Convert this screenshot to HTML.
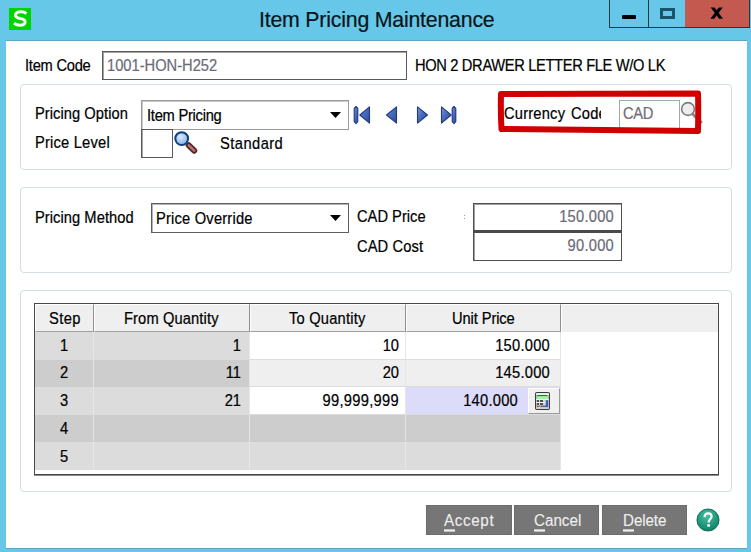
<!DOCTYPE html>
<html><head><meta charset="utf-8">
<style>
*{margin:0;padding:0;box-sizing:border-box}
html,body{width:751px;height:552px;overflow:hidden;background:#66C7E8;font-family:"Liberation Sans",sans-serif}
.a{position:absolute}
.t{position:absolute;font-size:14.7px;line-height:20px;white-space:nowrap;color:#000;-webkit-text-stroke:0.2px currentColor;transform:scaleY(1.12);transform-origin:0 15px}
#client{position:absolute;left:6px;top:41px;width:741px;height:507px;background:#fff;box-shadow:0 -1px 0 #5AA6C4, 0 1px 0 #5AA6C4}
</style></head><body>
<div class="a" style="left:9px;top:8px;width:22px;height:22px;background:#00D400"></div>
<svg class="a" style="left:9px;top:8px" width="22" height="22" viewBox="0 0 22 22"><path d="M17.4 5.6 C15.9 4.2 13.6 3.7 11.1 3.8 C8 3.9 6.4 5.3 6.5 7.3 C6.6 9.3 8.6 10.1 11.2 10.6 C14.2 11.1 16.1 11.9 16.1 14.1 C16.1 16.3 13.8 17.3 11 17.3 C8.5 17.3 6.5 16.5 5 15.1" fill="none" stroke="#fff" stroke-width="3" stroke-linecap="butt"/></svg>
<div class="t" style="left:259px;top:7px;font-size:21.3px;line-height:26px;letter-spacing:-0.2px;color:#06141A;transform:none">Item Pricing Maintenance</div>
<div class="a" style="left:609px;top:0px;width:141px;height:28px;border:1px solid #2A3840;border-top:none"></div>
<div class="a" style="left:648px;top:0px;width:1px;height:28px;background:#2A3840"></div>
<div class="a" style="left:685px;top:0px;width:64px;height:27px;background:#C45A4F"></div>
<div class="a" style="left:685px;top:27px;width:64px;height:1px;background:#4A2A28"></div>
<div class="a" style="left:622px;top:15px;width:14px;height:4px;background:#000;border-radius:1px"></div>
<div class="a" style="left:660px;top:8px;width:15px;height:11px;border:3px solid #1B5468"></div>
<svg class="a" style="left:710px;top:7px" width="14" height="12" viewBox="0 0 14 12"><defs><clipPath id="xc"><rect x="0" y="0.4" width="14" height="11.4"/></clipPath></defs><g clip-path="url(#xc)"><path d="M1.8 -0.6 L11.6 12.4 M11.6 -0.6 L1.8 12.4" stroke="#000" stroke-width="3.2"/></g></svg>
<div id="client"></div>
<div class="t" style="left:25px;top:56px;font-size:14.7px;letter-spacing:-0.25px;color:#000;">Item Code</div>
<div class="a" style="left:102px;top:51px;width:305px;height:29px;border:1px solid #5A5A5A;box-shadow:inset 1px 1px 0 #A4A4A4;background:#fff"></div>
<div class="t" style="left:107px;top:56px;font-size:14.7px;letter-spacing:0px;color:#6B6B78;">1001-HON-H252</div>
<div class="t" style="left:415px;top:56px;font-size:14.7px;letter-spacing:-0.35px;color:#000;">HON 2 DRAWER LETTER FLE W/O LK</div>
<div class="a" style="left:20px;top:84px;width:712px;height:86px;border:1px solid #D3DDE4;border-radius:4px"></div>
<div class="t" style="left:35px;top:104px;font-size:14.7px;letter-spacing:0.05px;color:#000;">Pricing Option</div>
<div class="t" style="left:35px;top:133px;font-size:14.7px;letter-spacing:0.2px;color:#000;">Price Level</div>
<div class="a" style="left:141px;top:100px;width:208px;height:30px;border:1px solid #9A9A9A;box-shadow:inset 1px 1px 0 #C8C8C8;background:#fff"></div>
<div class="t" style="left:147px;top:106px;font-size:14.7px;letter-spacing:-0.25px;color:#000;">Item Pricing</div>
<svg class="a" style="left:330px;top:112px" width="11" height="6"><path d="M0 0 L11 0 L5.5 6 Z" fill="#000"/></svg>
<div class="a" style="left:141px;top:129px;width:32px;height:29px;border:1px solid #5A5A5A;box-shadow:inset 1px 0 0 #A4A4A4;background:#fff"></div>
<svg class="a" style="left:173px;top:130px" width="25" height="25" viewBox="0 0 25 25"><defs><radialGradient id="lg" cx="0.4" cy="0.35" r="0.7"><stop offset="0" stop-color="#DCEBFB"/><stop offset="1" stop-color="#80B0E8"/></radialGradient></defs><line x1="15.8" y1="15.3" x2="21.2" y2="20.7" stroke="#5A2626" stroke-width="6" stroke-linecap="round"/><line x1="15.8" y1="15.3" x2="21.2" y2="20.7" stroke="#B07878" stroke-width="2.4" stroke-linecap="round"/><circle cx="8.7" cy="8.6" r="6.4" fill="url(#lg)" stroke="#0C4080" stroke-width="2"/></svg>
<div class="t" style="left:220px;top:134px;font-size:14.7px;letter-spacing:0.45px;color:#000;">Standard</div>
<svg class="a" style="left:353px;top:104px" width="20" height="22" viewBox="0 0 20 22"><defs><linearGradient id="ngfirst" x1="0" y1="0" x2="1" y2="1"><stop offset="0" stop-color="#7A9AE0"/><stop offset="0.45" stop-color="#4A6CC0"/><stop offset="1" stop-color="#2C4A9C"/></linearGradient></defs><path d="M3 2.4 L4.8 4.4 L4.8 17.6 L3 19.6 L1.2 17.6 L1.2 4.4 Z" fill="url(#ngfirst)" stroke="#22397E" stroke-width="1.1" stroke-linejoin="round"/><path d="M16.5 2.9 L16.5 19.1 L6.8 11 Z" fill="url(#ngfirst)" stroke="#22397E" stroke-width="1.1" stroke-linejoin="round"/></svg>
<svg class="a" style="left:385px;top:104px" width="20" height="22" viewBox="0 0 20 22"><defs><linearGradient id="ngprev" x1="0" y1="0" x2="1" y2="1"><stop offset="0" stop-color="#7A9AE0"/><stop offset="0.45" stop-color="#4A6CC0"/><stop offset="1" stop-color="#2C4A9C"/></linearGradient></defs><path d="M11.5 2.9 L11.5 19.1 L1.5 11 Z" fill="url(#ngprev)" stroke="#22397E" stroke-width="1.1" stroke-linejoin="round"/></svg>
<svg class="a" style="left:416px;top:104px" width="20" height="22" viewBox="0 0 20 22"><defs><linearGradient id="ngnext" x1="0" y1="0" x2="1" y2="1"><stop offset="0" stop-color="#7A9AE0"/><stop offset="0.45" stop-color="#4A6CC0"/><stop offset="1" stop-color="#2C4A9C"/></linearGradient></defs><path d="M1.5 2.9 L1.5 19.1 L11.5 11 Z" fill="url(#ngnext)" stroke="#22397E" stroke-width="1.1" stroke-linejoin="round"/></svg>
<svg class="a" style="left:440px;top:104px" width="20" height="22" viewBox="0 0 20 22"><defs><linearGradient id="nglast" x1="0" y1="0" x2="1" y2="1"><stop offset="0" stop-color="#7A9AE0"/><stop offset="0.45" stop-color="#4A6CC0"/><stop offset="1" stop-color="#2C4A9C"/></linearGradient></defs><path d="M1.5 2.9 L1.5 19.1 L11.2 11 Z" fill="url(#nglast)" stroke="#22397E" stroke-width="1.1" stroke-linejoin="round"/><path d="M14 2.4 L15.8 4.4 L15.8 17.6 L14 19.6 L12.2 17.6 L12.2 4.4 Z" fill="url(#nglast)" stroke="#22397E" stroke-width="1.1" stroke-linejoin="round"/></svg>
<div class="a" style="left:504px;top:97px;width:97px;height:29px;overflow:hidden"><div class="t" style="left:0px;top:7px;font-size:14.7px;letter-spacing:0.2px;word-spacing:1.5px">Currency Code</div></div>
<div class="a" style="left:619px;top:100px;width:61px;height:30px;border:1px solid #A0A8AE;background:#fff"></div>
<div class="t" style="left:623px;top:104px;font-size:14.7px;letter-spacing:-0.3px;color:#6E6E78;">CAD</div>
<svg class="a" style="left:680px;top:101px" width="26" height="26" viewBox="0 0 26 26"><line x1="13" y1="13.5" x2="21" y2="21" stroke="#8A8A8A" stroke-width="3" stroke-linecap="round"/><circle cx="8" cy="8" r="6.4" fill="#EDEDED" stroke="#7C7C7C" stroke-width="1.6"/></svg>
<svg class="a" style="left:495px;top:88px" width="212" height="48" viewBox="0 0 212 48"><path d="M6 6 L203 5.5 Q203.5 20 203 43 L6.5 41 Q5.5 25 6 6 Z" fill="none" stroke="#D10000" stroke-width="6" stroke-linejoin="round"/></svg>
<div class="a" style="left:20px;top:187px;width:712px;height:86px;border:1px solid #D3DDE4;border-radius:4px"></div>
<div class="t" style="left:35px;top:208px;font-size:14.7px;letter-spacing:0.05px;color:#000;">Pricing Method</div>
<div class="a" style="left:151px;top:203px;width:198px;height:30px;border:1px solid #5E5E5E;box-shadow:inset 1px 1px 0 #B4B4B4;background:#fff"></div>
<div class="t" style="left:156px;top:209px;font-size:14.7px;letter-spacing:0.2px;color:#000;">Price Override</div>
<svg class="a" style="left:330px;top:215px" width="11" height="6"><path d="M0 0 L11 0 L5.5 6 Z" fill="#000"/></svg>
<div class="t" style="left:357px;top:207px;font-size:14.7px;letter-spacing:0px;color:#000;">CAD Price</div>
<div class="t" style="left:357px;top:237px;font-size:14.7px;letter-spacing:0.1px;color:#000;">CAD Cost</div>
<div class="a" style="left:464px;top:215px;width:1px;height:1px;background:#6FA8E0"></div><div class="a" style="left:464px;top:218px;width:1px;height:1px;background:#6FA8E0"></div>
<div class="a" style="left:473px;top:203px;width:149px;height:29px;border:1px solid #505050;box-shadow:inset 1px 1px 0 #A0A0A0;background:#fff"></div>
<div class="a" style="left:473px;top:230px;width:149px;height:31px;border:1px solid #505050;border-top-width:3px;border-top-color:#4A4A4A;box-shadow:inset 1px 0 0 #A0A0A0;background:#fff"></div>
<div class="t" style="left:314px;width:300px;text-align:right;top:207px;font-size:14.7px;letter-spacing:0.25px;color:#6B6B78;">150.000</div>
<div class="t" style="left:314px;width:300px;text-align:right;top:236px;font-size:14.7px;letter-spacing:0.25px;color:#6B6B78;">90.000</div>
<div class="a" style="left:20px;top:290px;width:712px;height:202px;border:1px solid #D3DDE4;border-radius:4px"></div>
<div class="a" style="left:34px;top:303px;width:685px;height:172px;border:1px solid #474747;box-shadow:0 1px 0 #8A8A8A;background:#fff"></div>
<div class="a" style="left:35px;top:304px;width:683px;height:28px;background:#EFEFEF"></div>
<div class="a" style="left:35px;top:304px;width:59px;height:28px;border-top:1px solid #fff;border-left:1px solid #fff;border-right:1px solid #8E8E8E;border-bottom:1px solid #A0A0A0"></div>
<div class="a" style="left:94px;top:304px;width:156px;height:28px;border-top:1px solid #fff;border-left:1px solid #fff;border-right:1px solid #8E8E8E;border-bottom:1px solid #A0A0A0"></div>
<div class="a" style="left:250px;top:304px;width:156px;height:28px;border-top:1px solid #fff;border-left:1px solid #fff;border-right:1px solid #8E8E8E;border-bottom:1px solid #A0A0A0"></div>
<div class="a" style="left:406px;top:304px;width:155px;height:28px;border-top:1px solid #fff;border-left:1px solid #fff;border-right:1px solid #8E8E8E;border-bottom:1px solid #A0A0A0"></div>
<div class="a" style="left:561px;top:304px;width:157px;height:28px;border-top:1px solid #fff;border-left:1px solid #fff"></div>
<div class="a" style="left:35px;top:332px;width:59px;height:28px;background:#DCDCDC;border-right:1px solid #E6E6E6;border-bottom:1px solid #DCDCDC"></div>
<div class="a" style="left:35px;top:360px;width:59px;height:27px;background:#CDCDCD;border-right:1px solid #E6E6E6;border-bottom:1px solid #CDCDCD"></div>
<div class="a" style="left:35px;top:387px;width:59px;height:28px;background:#DCDCDC;border-right:1px solid #E6E6E6;border-bottom:1px solid #DCDCDC"></div>
<div class="a" style="left:35px;top:415px;width:59px;height:27px;background:#CDCDCD;border-right:1px solid #E6E6E6;border-bottom:1px solid #CDCDCD"></div>
<div class="a" style="left:35px;top:442px;width:59px;height:28px;background:#DCDCDC;border-right:1px solid #E6E6E6;border-bottom:1px solid #DCDCDC"></div>
<div class="a" style="left:94px;top:332px;width:156px;height:28px;background:#DCDCDC;border-right:1px solid #E6E6E6;border-bottom:1px solid #DCDCDC"></div>
<div class="a" style="left:94px;top:360px;width:156px;height:27px;background:#CDCDCD;border-right:1px solid #E6E6E6;border-bottom:1px solid #CDCDCD"></div>
<div class="a" style="left:94px;top:387px;width:156px;height:28px;background:#DCDCDC;border-right:1px solid #E6E6E6;border-bottom:1px solid #DCDCDC"></div>
<div class="a" style="left:94px;top:415px;width:156px;height:27px;background:#CDCDCD;border-right:1px solid #E6E6E6;border-bottom:1px solid #CDCDCD"></div>
<div class="a" style="left:94px;top:442px;width:156px;height:28px;background:#DCDCDC;border-right:1px solid #E6E6E6;border-bottom:1px solid #DCDCDC"></div>
<div class="a" style="left:250px;top:332px;width:156px;height:28px;background:#FFFFFF;border-right:1px solid #E6E6E6;border-bottom:1px solid #DCDCDC"></div>
<div class="a" style="left:250px;top:360px;width:156px;height:27px;background:#EFEFEF;border-right:1px solid #E6E6E6;border-bottom:1px solid #DCDCDC"></div>
<div class="a" style="left:250px;top:387px;width:156px;height:28px;background:#FFFFFF;border-right:1px solid #E6E6E6;border-bottom:1px solid #DCDCDC"></div>
<div class="a" style="left:250px;top:415px;width:156px;height:27px;background:#CDCDCD;border-right:1px solid #E6E6E6;border-bottom:1px solid #CDCDCD"></div>
<div class="a" style="left:250px;top:442px;width:156px;height:28px;background:#DCDCDC;border-right:1px solid #E6E6E6;border-bottom:1px solid #DCDCDC"></div>
<div class="a" style="left:406px;top:332px;width:155px;height:28px;background:#FFFFFF;border-right:1px solid #E6E6E6;border-bottom:1px solid #DCDCDC"></div>
<div class="a" style="left:406px;top:360px;width:155px;height:27px;background:#EFEFEF;border-right:1px solid #E6E6E6;border-bottom:1px solid #DCDCDC"></div>
<div class="a" style="left:406px;top:387px;width:155px;height:28px;background:#DCDCFA;border-right:1px solid #E6E6E6;border-bottom:1px solid #DCDCDC"></div>
<div class="a" style="left:406px;top:415px;width:155px;height:27px;background:#CDCDCD;border-right:1px solid #E6E6E6;border-bottom:1px solid #CDCDCD"></div>
<div class="a" style="left:406px;top:442px;width:155px;height:28px;background:#DCDCDC;border-right:1px solid #E6E6E6;border-bottom:1px solid #DCDCDC"></div>
<div class="t" style="left:49px;top:309px;font-size:14.7px;letter-spacing:0.4px;color:#000;">Step</div>
<div class="t" style="left:124px;top:309px;font-size:14.7px;letter-spacing:0.12px;color:#000;">From Quantity</div>
<div class="t" style="left:289px;top:309px;font-size:14.7px;letter-spacing:0.2px;color:#000;">To Quantity</div>
<div class="t" style="left:452px;top:309px;font-size:14.7px;letter-spacing:-0.1px;color:#000;">Unit Price</div>
<div class="t" style="left:35px;width:58px;text-align:center;top:336px;font-size:14.7px">1</div>
<div class="t" style="left:35px;width:58px;text-align:center;top:363px;font-size:14.7px">2</div>
<div class="t" style="left:35px;width:58px;text-align:center;top:391px;font-size:14.7px">3</div>
<div class="t" style="left:35px;width:58px;text-align:center;top:419px;font-size:14.7px">4</div>
<div class="t" style="left:35px;width:58px;text-align:center;top:447px;font-size:14.7px">5</div>
<div class="t" style="left:-59px;width:300px;text-align:right;top:336px;font-size:14.7px;letter-spacing:0px;color:#000;">1</div>
<div class="t" style="left:-59px;width:300px;text-align:right;top:363px;font-size:14.7px;letter-spacing:0px;color:#000;">11</div>
<div class="t" style="left:-59px;width:300px;text-align:right;top:391px;font-size:14.7px;letter-spacing:0px;color:#000;">21</div>
<div class="t" style="left:99px;width:300px;text-align:right;top:336px;font-size:14.7px;letter-spacing:0px;color:#000;">10</div>
<div class="t" style="left:99px;width:300px;text-align:right;top:363px;font-size:14.7px;letter-spacing:0px;color:#000;">20</div>
<div class="t" style="left:99px;width:300px;text-align:right;top:391px;font-size:14.7px;letter-spacing:0.3px;color:#000;">99,999,999</div>
<div class="t" style="left:250px;width:300px;text-align:right;top:336px;font-size:14.7px;letter-spacing:0.25px;color:#000;">150.000</div>
<div class="t" style="left:250px;width:300px;text-align:right;top:363px;font-size:14.7px;letter-spacing:0.25px;color:#000;">145.000</div>
<div class="t" style="left:218px;width:300px;text-align:right;top:391px;font-size:14.7px;letter-spacing:0.25px;color:#000;">140.000</div>
<div class="a" style="left:528px;top:388px;width:32px;height:26px;background:#F0F0F0;border-top:1px solid #fff;border-left:1px solid #fff;border-right:1px solid #9A9A9A;border-bottom:1px solid #9A9A9A"></div>
<svg class="a" style="left:535px;top:392px" width="15" height="18" viewBox="0 0 15 18"><rect x="0.6" y="0.6" width="13.8" height="16.8" rx="1.2" fill="#D4D4D4" stroke="#3C3C3C" stroke-width="1.2"/><rect x="1.2" y="1.2" width="12.6" height="1.8" fill="#F4F4F4"/><rect x="2" y="3" width="11" height="4" fill="#A6EFA6"/><rect x="2" y="3" width="10.5" height="1.1" fill="#0A8A0A"/><rect x="1.2" y="7" width="12.6" height="1" fill="#F4F4F4"/><rect x="2" y="8.2" width="2" height="1.6" fill="#303030"/><rect x="5" y="8.2" width="3" height="1.6" fill="#303030"/><rect x="1.2" y="10" width="9.5" height="1" fill="#F4F4F4"/><rect x="2" y="11.2" width="2" height="1.6" fill="#303030"/><rect x="5" y="11.2" width="3" height="1.6" fill="#303030"/><rect x="10.8" y="8.2" width="2.2" height="7" fill="#3A62B8"/><rect x="6" y="13.6" width="7" height="1.6" fill="#3A62B8"/><rect x="2" y="13.6" width="1.8" height="1.6" fill="#B04A30"/><rect x="4" y="13.6" width="1.8" height="1.6" fill="#B08040"/><rect x="1.2" y="15.4" width="12.6" height="1.4" fill="#DADADA"/></svg>
<div class="a" style="left:426px;top:505px;width:86px;height:30px;background:#767676;border:1px solid #6C6C6C"></div>
<div class="t" style="left:444px;top:511px;font-size:15.2px;letter-spacing:0.65px;color:#EFEFEF;-webkit-text-stroke:0.1px #EFEFEF"><u style="text-decoration:none;border-bottom:2px solid #EFEFEF;padding-bottom:0px">A</u>ccept</div>
<div class="a" style="left:514px;top:505px;width:85px;height:30px;background:#767676;border:1px solid #6C6C6C"></div>
<div class="t" style="left:534px;top:511px;font-size:15.2px;letter-spacing:0.0px;color:#EFEFEF;-webkit-text-stroke:0.1px #EFEFEF"><u style="text-decoration:none;border-bottom:2px solid #EFEFEF;padding-bottom:0px">C</u>ancel</div>
<div class="a" style="left:602px;top:505px;width:85px;height:30px;background:#767676;border:1px solid #6C6C6C"></div>
<div class="t" style="left:623px;top:511px;font-size:15.2px;letter-spacing:-0.1px;color:#EFEFEF;-webkit-text-stroke:0.1px #EFEFEF"><u style="text-decoration:none;border-bottom:2px solid #EFEFEF;padding-bottom:0px">D</u>elete</div>
<svg class="a" style="left:696px;top:508px" width="24" height="24" viewBox="0 0 24 24"><defs><radialGradient id="hg" cx="0.45" cy="0.3" r="0.75"><stop offset="0" stop-color="#45C2A4"/><stop offset="1" stop-color="#0C7C62"/></radialGradient></defs><circle cx="12" cy="12" r="11" fill="url(#hg)" stroke="#0B6E56" stroke-width="1"/><path d="M8.6 9.2 C8.6 6.6 10.2 5.4 12.1 5.4 C14.2 5.4 15.6 6.7 15.6 8.6 C15.6 10.9 12.9 11.4 12.7 13.6 L12.7 14.6" fill="none" stroke="#fff" stroke-width="2.2" stroke-linecap="butt"/><rect x="11.3" y="16.2" width="2.6" height="2.5" fill="#fff"/></svg>
</body></html>
